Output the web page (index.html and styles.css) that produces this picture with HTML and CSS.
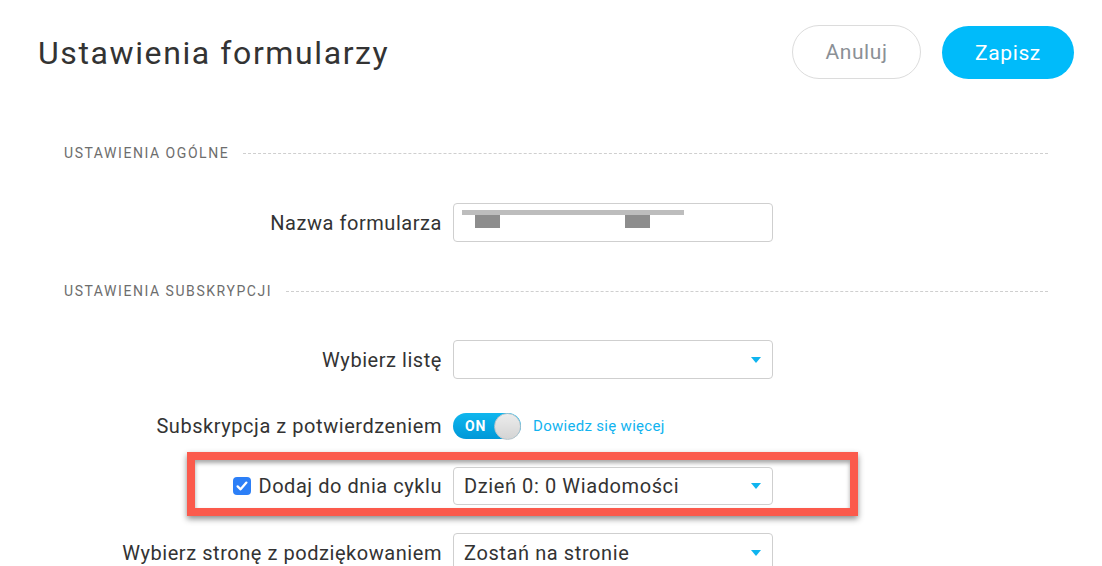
FILE: index.html
```html
<!DOCTYPE html>
<html lang="pl">
<head>
<meta charset="utf-8">
<title>Ustawienia formularzy</title>
<link rel="stylesheet" href="styles.css">
</head>
<body>
<header class="page-header">
  <h1 class="page-title">Ustawienia formularzy</h1>
  <div class="actions">
    <button class="btn btn-cancel">Anuluj</button>
    <button class="btn btn-save">Zapisz</button>
  </div>
</header>
<main class="content">
  <div class="section-title first"><span>USTAWIENIA OGÓLNE</span><i class="dash"></i></div>
  <div class="row row-name">
    <label class="label">Nazwa formularza</label>
    <div class="field name-field">
      <div class="blur-bar"></div>
      <div class="blur-blocks"><span class="blk"></span><span class="blk second"></span></div>
    </div>
  </div>

  <div class="section-title"><span>USTAWIENIA SUBSKRYPCJI</span><i class="dash"></i></div>
  <div class="row row-list">
    <label class="label">Wybierz listę</label>
    <div class="field select"><span class="value"></span><span class="caret"></span></div>
  </div>
  <div class="row row-toggle">
    <label class="label">Subskrypcja z potwierdzeniem</label>
    <div class="toggle-wrap">
      <div class="toggle"><span class="on">ON</span><span class="knob"></span></div>
      <a class="more">Dowiedz się więcej</a>
    </div>
  </div>
  <div class="highlight">
    <div class="row row-cycle">
      <label class="label label-check">
        <span class="checkbox"><svg viewBox="0 0 18 18" width="18" height="18"><path d="M4.6 9.4 L7.6 12.3 L13.4 5.6" fill="none" stroke="#fff" stroke-width="2.3" stroke-linecap="round" stroke-linejoin="round"/></svg></span>
        Dodaj do dnia cyklu
      </label>
      <div class="field select"><span class="value">Dzień 0: 0 Wiadomości</span><span class="caret"></span></div>
    </div>
  </div>
  <div class="row row-thanks">
    <label class="label">Wybierz stronę z podziękowaniem</label>
    <div class="field select"><span class="value">Zostań na stronie</span><span class="caret"></span></div>
  </div>
</main>
</body>
</html>
```
FILE: styles.css
```css
* { box-sizing: border-box; }
html, body { margin: 0; padding: 0; }
body {
  font-family: Roboto, "Liberation Sans", sans-serif;
  color: #333;
  background: #fff;
  width: 1102px;
  height: 566px;
  overflow: hidden;
}
.page-header {
  display: flex;
  justify-content: space-between;
  align-items: flex-start;
  height: 106px;
  padding: 25px 28px 0 38px;
}
.page-title {
  margin: 8px 0 0;
  font-size: 32px;
  font-weight: 400;
  letter-spacing: 1.6px;
  line-height: 40px;
  color: #333;
}
.actions { display: flex; gap: 21px; }
.btn {
  font-family: Roboto, "Liberation Sans", sans-serif;
  height: 54px;
  border-radius: 27px;
  font-size: 21px;
  letter-spacing: 0.6px;
  cursor: pointer;
}
.btn-cancel {
  width: 129px;
  background: #fff;
  border: 1px solid #dcdcdc;
  color: #8b9096;
}
.btn-save {
  width: 132px;
  height: 53px;
  margin-top: 1px;
  background: #00bbfa;
  border: none;
  color: #fff;
}
.content { padding: 0 54px 0 64px; }
.section-title {
  display: flex;
  align-items: center;
  height: 20px;
  margin-top: 39px;
  font-size: 14px;
  letter-spacing: 1.55px;
  color: #6d6d6d;
}
.section-title.first { margin-top: 37px; }
.section-title .dash {
  flex: 1;
  margin-left: 14px;
  border-top: 1px dashed #cfcfcf;
}
.row {
  display: flex;
  align-items: center;
  gap: 11px;
}
.label {
  width: 378px;
  text-align: right;
  font-size: 20px;
  letter-spacing: 0.55px;
  color: #333;
}
.field {
  width: 320px;
  height: 39px;
  border: 1px solid #cfcfcf;
  border-radius: 4px;
  background: #fff;
}
.row-name { margin-top: 40px; }
.name-field { padding: 6px 0 0 8px; }
.blur-bar { width: 222px; height: 5px; background: #bdbdbd; }
.blur-blocks { display: flex; padding-left: 13px; }
.blk { width: 25px; height: 13px; background: #8d8d8d; }
.blk.second { margin-left: 125px; }
.select {
  display: flex;
  align-items: center;
  justify-content: space-between;
  padding: 0 10px;
  font-size: 20px;
  letter-spacing: 0.6px;
  color: #333;
}
.caret {
  width: 0; height: 0;
  border-left: 5px solid transparent;
  border-right: 5px solid transparent;
  border-top: 6px solid #0fb4ef;
  margin-right: 1px;
}
.row-list { margin-top: 39px; }
.row-toggle { margin-top: 34px; }
.toggle-wrap { display: flex; align-items: center; gap: 12px; }
.toggle {
  width: 68px;
  height: 26px;
  border-radius: 13px;
  background: linear-gradient(#0fb6ee, #0098d8);
  display: flex;
  align-items: center;
  justify-content: space-between;
  padding-left: 12px;
}
.toggle .on {
  color: #fff;
  font-weight: 700;
  font-size: 14px;
  letter-spacing: 0.8px;
}
.toggle .knob {
  width: 27px;
  height: 27px;
  border-radius: 50%;
  background: linear-gradient(#ececec, #d4d4d4);
  border: 1px solid #b9c6cc;
}
.more {
  color: #11b3ef;
  font-size: 15px;
  letter-spacing: 0.3px;
}
.highlight {
  margin: 13px 0 0 123px;
  width: 671px;
  height: 64px;
  border: 8px solid #fb5a4c;
  padding-top: 7px;
  box-shadow: 0 3px 6px rgba(0,0,0,0.45), inset 0 3px 4px rgba(0,0,0,0.35);
}
.row-cycle .label { width: 247px; }
.row-cycle .field { height: 38px; }
.label-check {
  display: flex;
  align-items: center;
  justify-content: flex-end;
  gap: 7px;
}
.checkbox {
  width: 18px;
  height: 18px;
  border-radius: 4px;
  background: #2c7ff7;
  display: inline-flex;
}
.row-thanks { margin-top: 17px; }
```
